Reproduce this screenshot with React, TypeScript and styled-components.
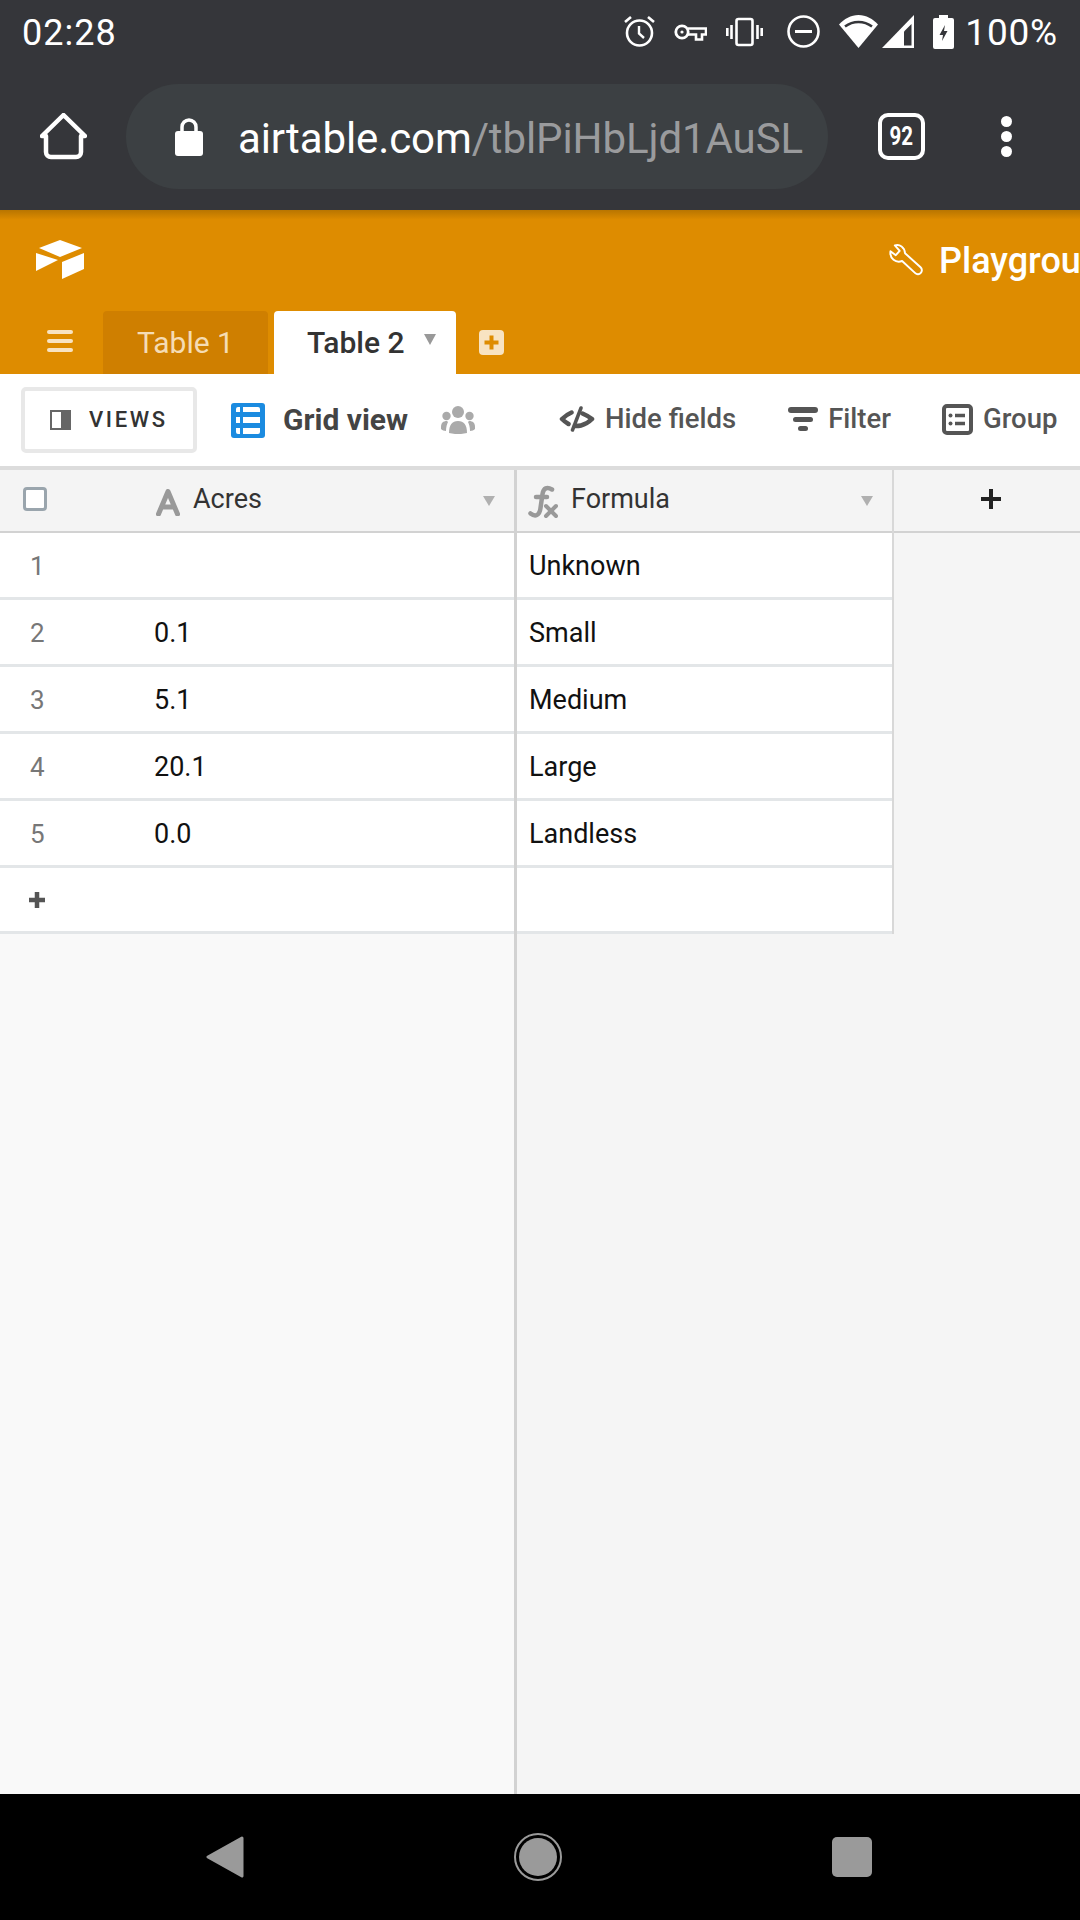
import styled, { createGlobalStyle } from 'styled-components';

const rows = [
  { id: 1, acres: '', formula: 'Unknown' },
  { id: 2, acres: '0.1', formula: 'Small' },
  { id: 3, acres: '5.1', formula: 'Medium' },
  { id: 4, acres: '20.1', formula: 'Large' },
  { id: 5, acres: '0.0', formula: 'Landless' },
];

export default function App() {
  return (
    <Page>
      <GlobalStyle />
      <StatusBar>
        <Time>02:28</Time>
        <StatusIcons>
          <StatusIcon $left={0} width='33' height='33' viewBox='0 0 33 33'>
            <circle cx='16.5' cy='18' r='12.5' fill='none' stroke='#fff' strokeWidth='2.6' />
            <path d='M16 11v7.5l5 4.5' fill='none' stroke='#fff' strokeWidth='2.4' />
            <path d='M2 7l6-5M31 7l-6-5' stroke='#fff' strokeWidth='2.6' />
          </StatusIcon>
          <StatusIcon $left={18} width='33' height='18' viewBox='0 0 33 18'>
            <circle cx='8' cy='9' r='6.2' fill='none' stroke='#fff' strokeWidth='2.8' />
            <circle cx='8' cy='9' r='1.6' fill='#fff' />
            <path d='M14 5.5h18v6h-4v5h-6v-5h-8' fill='none' stroke='#fff' strokeWidth='2.6' />
          </StatusIcon>
          <StatusIcon $left={19} width='37' height='30' viewBox='0 0 37 30'>
            <rect x='10.5' y='2' width='16' height='26' rx='2' fill='none' stroke='#fff' strokeWidth='2.6' />
            <path d='M5.5 8v14M1.3 11v8M31.5 8v14M35.7 11v8' stroke='#fff' strokeWidth='2.6' />
          </StatusIcon>
          <StatusIcon $left={24} width='33' height='33' viewBox='0 0 33 33'>
            <circle cx='16.5' cy='16.5' r='15' fill='none' stroke='#fff' strokeWidth='2.6' />
            <rect x='8' y='15' width='17' height='3' fill='#fff' />
          </StatusIcon>
          <StatusIcon $left={19} width='39' height='33' viewBox='0 0 39 33'>
            <path d='M19.5 33L0 9.5C5 4 12 0 19.5 0S34 4 39 9.5Z' fill='#fff' />
            <path d='M6 11.500C10 8.500 14.500 7 19.500 7S29 8.500 33 11.500' fill='none' stroke='#35363a' strokeWidth='2.600' />
          </StatusIcon>
          <StatusIcon $left={4} width='32' height='33' viewBox='0 0 32 33'>
            <path d='M32 0V33H0Z' fill='#fff' />
            <path d='M22 16.500V30.500H29.500V9Z' fill='#35363a' />
          </StatusIcon>
          <StatusIcon $left={19} width='21' height='34' viewBox='0 0 21 34'>
            <path d='M6 0h9v3h4a2 2 0 0 1 2 2v27a2 2 0 0 1-2 2H2a2 2 0 0 1-2-2V5a2 2 0 0 1 2-2h4Z' fill='#fff' />
            <path d='M12 10L6.500 20h3.500l-1 6L14.500 16h-3.500Z' fill='#35363a' />
          </StatusIcon>
          <Battery>100%</Battery>
        </StatusIcons>
      </StatusBar>

      <BrowserBar>
        <HomeIcon width='47' height='47' viewBox='0 0 47 47'>
          <path
            d='M6 39V23H2L23.500 2L45 23H41V39a5 5 0 0 1-5 5H11a5 5 0 0 1-5-5Z'
            fill='none'
            stroke='#fff'
            strokeWidth='4.500'
            strokeLinejoin='round'
          />
        </HomeIcon>
        <Omnibox>
          <svg width='28' height='38' viewBox='0 0 28 38'>
            <path d='M7 14V9a7 7 0 0 1 14 0v5' fill='none' stroke='#fff' strokeWidth='3.500' />
            <rect y='13' width='28' height='25' rx='3' fill='#fff' />
          </svg>
          <Url>
            airtable.com<UrlPath>/tblPiHbLjd1AuSL</UrlPath>
          </Url>
        </Omnibox>
        <TabCount>
          <TabNumber>92</TabNumber>
        </TabCount>
        <MenuDots>
          <span />
          <span />
          <span />
        </MenuDots>
      </BrowserBar>

      <AppHeader>
        <TopRow>
          <LogoIcon width='48' height='39' viewBox='0 0 48 39'>
            <path d='M24 0L46 8L24 17L3 8Z' fill='#fff' />
            <path d='M0 13L22 20L0 31Z' fill='#fff' />
            <path d='M48 13V29L26 39V22Z' fill='#fff' />
          </LogoIcon>
          <BaseTitle>
            <svg width='34' height='36' viewBox='8 6 35 37'>
              <path
                d='M14 8.500C19 7 24 10 24.500 16.500L40.500 31A3.800 3.800 0 0 1 35 37L21.500 24.500C15 27 8.500 22 9.500 14.500L15 18.500L19 14Z'
                fill='none'
                stroke='#fff'
                strokeWidth='2'
                strokeLinejoin='round'
              />
            </svg>
            <BaseName>Playground</BaseName>
          </BaseTitle>
        </TopRow>
        <TabRow>
          <Hamburger>
            <span />
            <span />
            <span />
          </Hamburger>
          <TableTab>Table 1</TableTab>
          <TableTab $active>
            Table 2
            <TabCaret />
          </TableTab>
          <AddTable width='25' height='25' viewBox='0 0 25 25'>
            <rect width='25' height='25' rx='4' fill='#f8e3c2' />
            <path d='M12.500 5.500v14M5.500 12.500h14' stroke='#de8c00' strokeWidth='4' />
          </AddTable>
        </TabRow>
      </AppHeader>

      <ViewBar>
        <ViewsButton>
          <svg width='21' height='20' viewBox='0 0 21 20'>
            <rect x='1' y='1' width='19' height='18' fill='none' stroke='#666' strokeWidth='2' />
            <rect x='11' y='1' width='9' height='18' fill='#666' />
          </svg>
          <ViewsLabel>VIEWS</ViewsLabel>
        </ViewsButton>
        <GridIcon width='34' height='35' viewBox='0 0 34 35'>
          <rect width='34' height='35' rx='3' fill='#1b8be0' />
          <path
            d='M5 6a2 2 0 0 1 2-2h2v5H5ZM12 4h15a2 2 0 0 1 2 2v3H12ZM5 14h4v6H5ZM12 14h17v6H12ZM5 25h4v6H7a2 2 0 0 1-2-2ZM12 25h17v4a2 2 0 0 1-2 2H12Z'
            fill='#fff'
          />
        </GridIcon>
        <GridTitle>Grid view</GridTitle>
        <PeopleIcon width='34' height='28' viewBox='0 0 34 28'>
          <circle cx='17' cy='6' r='6' fill='#aaa' />
          <circle cx='5.500' cy='10' r='4.200' fill='#aaa' />
          <circle cx='28.500' cy='10' r='4.200' fill='#aaa' />
          <path d='M8 27c0-8 3-12 9-12s9 4 9 12c-6 1.500-12 1.500-18 0Z' fill='#aaa' />
          <path d='M0 21c0-4 2-6 6-6l1 1c-1 2-2 5-2 9c-2 0-4-1-5-2ZM34 21c0-4-2-6-6-6l-1 1c1 2 2 5 2 9c2 0 4-1 5-2Z' fill='#aaa' />
        </PeopleIcon>
        <ToolButton $left={84}>
          <svg width='36' height='26' viewBox='0 0 36 26'>
            <path
              d='M12.500 6.500C9 8 5.500 10.500 3 13c1.500 1.500 4 3.500 6.500 5M23.500 7.500C27 9 30.500 11 33 13c-3 3-7 5.500-11 6.500c-2 .5-4 .5-6 .5'
              fill='none'
              stroke='#555'
              strokeWidth='4.500'
              strokeLinecap='round'
              strokeLinejoin='round'
            />
            <path d='M22 2L13.500 24' stroke='#555' strokeWidth='3.500' strokeLinecap='round' />
          </svg>
          <span>Hide fields</span>
        </ToolButton>
        <ToolButton $left={52}>
          <svg width='30' height='24' viewBox='0 0 30 24'>
            <rect width='30' height='6' rx='3' fill='#555' />
            <rect x='5' y='10' width='20' height='5' rx='2.500' fill='#555' />
            <rect x='10' y='19' width='10' height='5' rx='2.500' fill='#555' />
          </svg>
          <span>Filter</span>
        </ToolButton>
        <ToolButton $left={51}>
          <svg width='31' height='31' viewBox='0 0 31 31'>
            <rect x='2' y='2' width='27' height='27' rx='3' fill='none' stroke='#555' strokeWidth='4' />
            <path d='M13 11.500h10M13 19.500h10' stroke='#555' strokeWidth='3.500' />
            <circle cx='8.500' cy='11.500' r='2' fill='#555' />
            <circle cx='8.500' cy='19.500' r='2' fill='#555' />
          </svg>
          <span>Group</span>
        </ToolButton>
      </ViewBar>

      <Sheet>
        <FrozenPane>
          <HeaderRow>
            <Checkbox />
            <FieldIcon width='24' height='27' viewBox='0 0 24 27'>
              <path d='M2.500 25L12 2.500L21.500 25M6.500 18H17.500' fill='none' stroke='#999' strokeWidth='5' strokeLinecap='round' strokeLinejoin='round' />
            </FieldIcon>
            <FieldName>Acres</FieldName>
            <HeaderCaret $left={221} />
          </HeaderRow>
          {rows.map((row) => (
            <Row key={row.id}>
              <RowNumber>{row.id}</RowNumber>
              <Cell>{row.acres}</Cell>
            </Row>
          ))}
          <AddRow>
            <svg width='18' height='18' viewBox='0 0 18 18'>
              <path d='M9 1v16M1 9h16' stroke='#555' strokeWidth='4.500' />
            </svg>
          </AddRow>
        </FrozenPane>

        <ScrollPane>
          <Column>
            <FormulaHeader>
              <FieldFormula width='30' height='34' viewBox='0 0 30 34'>
                <path
                  d='M24 4.500C19 1.500 15.500 3 14.500 9L12.500 23C11.500 31 7 32 2.500 28.500M8 12H19'
                  fill='none'
                  stroke='#999'
                  strokeWidth='4.500'
                  strokeLinecap='round'
                />
                <path d='M18 21L28 31M28 21L18 31' stroke='#999' strokeWidth='4' strokeLinecap='round' />
              </FieldFormula>
              <FormulaName>Formula</FormulaName>
              <HeaderCaret $left={191} />
            </FormulaHeader>
            {rows.map((row) => (
              <FormulaRow key={row.id}>{row.formula}</FormulaRow>
            ))}
            <FormulaRow $last />
          </Column>
          <AddField>
            <svg width='22' height='22' viewBox='0 0 22 22'>
              <path d='M11 1v20M1 11h20' stroke='#222' strokeWidth='4' />
            </svg>
          </AddField>
        </ScrollPane>
      </Sheet>

      <NavBar>
        <svg width='38' height='42' viewBox='0 0 38 42'>
          <path d='M36 2L2 21L36 40Z' fill='#9a9a9a' stroke='#9a9a9a' strokeWidth='3' strokeLinejoin='round' />
        </svg>
        <svg width='48' height='48' viewBox='0 0 48 48'>
          <circle cx='24' cy='24' r='23' fill='none' stroke='#9a9a9a' strokeWidth='2' />
          <circle cx='24' cy='24' r='19' fill='#9a9a9a' />
        </svg>
        <NavSquare />
      </NavBar>
    </Page>
  );
}

const GlobalStyle = createGlobalStyle`
  html, body {
    margin: 0;
    padding: 0;
    background: #000;
  }

  * {
    box-sizing: border-box;
  }
`;

const Page = styled.div`
  width: 1080px;
  height: 1920px;
  display: flex;
  flex-direction: column;
  overflow: hidden;
  font-family: Roboto, 'Liberation Sans', sans-serif;
`;

const StatusBar = styled.div`
  height: 63px;
  padding: 0 22px 0 22px;
  background: #35363a;
  display: flex;
  align-items: center;
  justify-content: space-between;
  color: #fff;
`;

const Time = styled.div`
  padding-top: 2px;
  font-size: 36px;
  letter-spacing: 1px;
`;

const StatusIcons = styled.div`
  display: flex;
  align-items: center;
`;

const StatusIcon = styled.svg<{ $left: number }>`
  margin-left: ${(p) => p.$left}px;
  flex-shrink: 0;
`;

const Battery = styled.div`
  margin-left: 11px;
  padding-top: 2px;
  font-size: 37px;
  letter-spacing: 0.8px;
`;

const BrowserBar = styled.div`
  height: 147px;
  background: #35363a;
  display: flex;
  align-items: center;
  padding-left: 40px;
`;

const HomeIcon = styled.svg`
  flex-shrink: 0;
`;

const Omnibox = styled.div`
  margin-left: 39px;
  width: 702px;
  height: 105px;
  border-radius: 53px;
  background: #3c4043;
  display: flex;
  align-items: center;
  gap: 35px;
  padding-left: 49px;
  flex-shrink: 0;
`;

const Url = styled.div`
  padding-top: 4px;
  font-size: 42px;
  letter-spacing: -0.1px;
  color: #fff;
  white-space: nowrap;
`;

const UrlPath = styled.span`
  color: #9a9b9d;
`;

const TabCount = styled.div`
  margin-left: 50px;
  width: 47px;
  height: 47px;
  border: 4.5px solid #fff;
  border-radius: 10px;
  display: flex;
  align-items: center;
  justify-content: center;
  flex-shrink: 0;
`;

const TabNumber = styled.span`
  font-size: 25px;
  font-weight: 700;
  color: #fff;
  transform: scaleX(0.82);
`;

const MenuDots = styled.div`
  margin-left: 76px;
  display: flex;
  flex-direction: column;
  gap: 4px;

  span {
    width: 11px;
    height: 11px;
    border-radius: 50%;
    background: #fff;
  }
`;

const AppHeader = styled.div`
  height: 164px;
  background: linear-gradient(#b87500, #de8c00 10px);
  display: flex;
  flex-direction: column;
`;

const TopRow = styled.div`
  height: 101px;
  padding: 30px 0 0 36px;
  display: flex;
  align-items: flex-start;
`;

const LogoIcon = styled.svg`
  flex-shrink: 0;
`;

const BaseTitle = styled.div`
  margin-left: 805px;
  display: flex;
  align-items: center;
  gap: 16px;
  flex-shrink: 0;
`;

const BaseName = styled.div`
  font-size: 36px;
  font-weight: 500;
  color: #fff;
  white-space: nowrap;
`;

const TabRow = styled.div`
  height: 63px;
  padding-left: 47px;
  display: flex;
  align-items: flex-end;
`;

const Hamburger = styled.div`
  width: 26px;
  margin: 0 30px 22px 0;
  display: flex;
  flex-direction: column;
  gap: 5px;

  span {
    height: 4px;
    border-radius: 2px;
    background: #f8e3c2;
  }
`;

const TableTab = styled.div<{ $active?: boolean }>`
  position: relative;
  width: ${(p) => (p.$active ? 182 : 165)}px;
  height: 63px;
  margin-right: ${(p) => (p.$active ? 7 : 6)}px;
  border-radius: 4px 4px 0 0;
  background: ${(p) => (p.$active ? '#fff' : '#cf7f00')};
  color: ${(p) => (p.$active ? '#333' : '#f5dcb4')};
  font-size: 30px;
  font-weight: ${(p) => (p.$active ? 500 : 400)};
  display: flex;
  align-items: center;
  padding-left: ${(p) => (p.$active ? 33 : 34)}px;
`;

const TabCaret = styled.span`
  position: absolute;
  left: 150px;
  top: 23px;
  border-left: 6.5px solid transparent;
  border-right: 6.5px solid transparent;
  border-top: 11px solid #999;
`;

const AddTable = styled.svg`
  margin: 0 0 19px 16px;
`;

const ViewBar = styled.div`
  height: 92px;
  background: #fff;
  padding-left: 21px;
  display: flex;
  align-items: center;
  white-space: nowrap;
`;

const ViewsButton = styled.div`
  width: 176px;
  height: 66px;
  border: 4px solid #e8e8e8;
  border-radius: 5px;
  display: flex;
  align-items: center;
  gap: 18px;
  padding-left: 25px;
  font-size: 22px;
  font-weight: 500;
  letter-spacing: 2.6px;
  color: #333;
  flex-shrink: 0;
`;

const ViewsLabel = styled.span`
  padding-bottom: 2px;
`;

const GridIcon = styled.svg`
  margin-left: 34px;
  flex-shrink: 0;
`;

const GridTitle = styled.div`
  margin-left: 18px;
  padding-bottom: 2px;
  font-size: 30px;
  font-weight: 700;
  color: #444;
`;

const PeopleIcon = styled.svg`
  margin-left: 33px;
  flex-shrink: 0;
`;

const ToolButton = styled.div<{ $left: number }>`
  margin-left: ${(p) => p.$left}px;
  display: flex;
  align-items: center;
  gap: 10px;
  font-size: 27.5px;
  font-weight: 500;
  color: #555;
  flex-shrink: 0;

  span {
    padding-bottom: 4px;
  }

  svg {
    margin-bottom: 2px;
  }
`;

const Sheet = styled.div`
  flex: 1;
  display: flex;
  border-top: 4px solid #dcdcdc;
  background: #f5f5f5;
`;

const FrozenPane = styled.div`
  width: 517px;
  flex-shrink: 0;
  background: #f9f9f9;
  border-right: 3px solid #d2d2d2;
`;

const HeaderRow = styled.div`
  position: relative;
  height: 63px;
  padding-left: 23px;
  background: #f4f4f4;
  border-bottom: 2px solid #d2d2d2;
  display: flex;
  align-items: center;
`;

const Checkbox = styled.div`
  width: 24px;
  height: 24px;
  border: 3px solid #9aa5ad;
  border-radius: 4px;
  background: #fff;
  flex-shrink: 0;
  margin-bottom: 4px;
`;

const FieldIcon = styled.svg`
  margin: 3px 0 0 109px;
`;

const FieldName = styled.div`
  margin: 0 0 0 13px;
  font-size: 27px;
  color: #333;
  padding-bottom: 4px;
`;

const HeaderCaret = styled.span<{ $left: number }>`
  margin-left: ${(p) => p.$left}px;
  border-left: 6.5px solid transparent;
  border-right: 6.5px solid transparent;
  border-top: 10px solid #b0b0b0;
`;

const Row = styled.div`
  height: 67px;
  padding-top: 2px;
  background: #fff;
  border-bottom: 3px solid #e3e6e8;
  display: flex;
  align-items: center;
`;

const RowNumber = styled.div`
  width: 154px;
  padding-left: 30px;
  font-size: 26px;
  color: #777;
`;

const Cell = styled.div`
  font-size: 27px;
  color: #111;
`;

const AddRow = styled.div`
  height: 66px;
  background: #fff;
  border-bottom: 3px solid #e3e6e8;
  padding-left: 28px;
  display: flex;
  align-items: center;
`;

const ScrollPane = styled.div`
  flex: 1;
  display: flex;
  align-items: flex-start;
`;

const Column = styled.div`
  width: 377px;
  border-right: 2px solid #d8d8d8;
  flex-shrink: 0;
`;

const FormulaHeader = styled.div`
  height: 63px;
  background: #f4f4f4;
  border-bottom: 2px solid #d2d2d2;
  padding-left: 11px;
  display: flex;
  align-items: center;
`;

const FieldFormula = styled.svg`
  flex-shrink: 0;
  margin-top: 2px;
`;

const FormulaName = styled.div`
  margin-left: 13px;
  font-size: 27px;
  color: #333;
  padding-bottom: 4px;
`;

const FormulaRow = styled.div<{ $last?: boolean }>`
  height: ${(p) => (p.$last ? 66 : 67)}px;
  padding-top: 2px;
  background: #fff;
  border-bottom: 3px solid #e3e6e8;
  padding-left: 12px;
  display: flex;
  align-items: center;
  font-size: 27px;
  color: #111;
`;

const AddField = styled.div`
  flex: 1;
  height: 63px;
  background: #f4f4f4;
  border-bottom: 2px solid #d2d2d2;
  display: flex;
  align-items: center;
  justify-content: center;
  padding: 0 0 4px 8px;
`;

const NavBar = styled.div`
  height: 126px;
  background: #000;
  display: flex;
  align-items: center;
  padding: 0 208px 0 206px;
  justify-content: space-between;
`;

const NavSquare = styled.div`
  width: 40px;
  height: 40px;
  border-radius: 5px;
  background: #9a9a9a;
`;
